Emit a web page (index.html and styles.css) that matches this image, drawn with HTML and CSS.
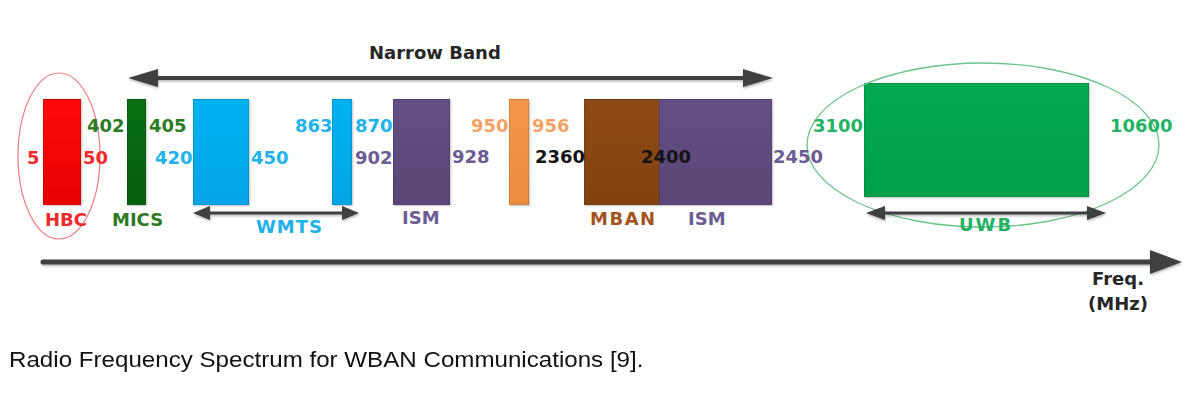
FILE: index.html
```html
<!DOCTYPE html>
<html lang="en">
<head>
<meta charset="utf-8">
<title>Radio Frequency Spectrum for WBAN Communications</title>
<link rel="stylesheet" href="styles.css">
</head>
<body>
<div class="figure">
  <div class="bar bar-hbc"></div>
  <div class="bar bar-mics"></div>
  <div class="bar bar-wmts1"></div>
  <div class="bar bar-wmts2"></div>
  <div class="bar bar-ism1"></div>
  <div class="bar bar-orange"></div>
  <div class="bar bar-mban"></div>
  <div class="bar bar-ism2"></div>
  <div class="bar bar-uwb"></div>

  <svg class="lines" width="1200" height="340" viewBox="0 0 1200 340" xmlns="http://www.w3.org/2000/svg">
    <defs>
      <filter id="sh" x="-5%" y="-50%" width="110%" height="200%">
        <feDropShadow dx="0.5" dy="1.5" stdDeviation="1" flood-color="#000" flood-opacity="0.3"/>
      </filter>
    </defs>
    <ellipse cx="59" cy="156" rx="41" ry="83" fill="none" stroke="#ea7b82" stroke-width="1.2"/>
    <ellipse cx="983" cy="145" rx="176" ry="82" fill="none" stroke="#6cc48c" stroke-width="1.3"/>
    <g fill="#404040" stroke="#404040" filter="url(#sh)">
      <line x1="150" y1="78" x2="750" y2="78" stroke-width="4"/>
      <polygon points="128,78 158,69 158,87" stroke="none"/>
      <polygon points="773,78 743,69 743,87" stroke="none"/>

      <line x1="205" y1="213" x2="347" y2="213" stroke-width="3"/>
      <polygon points="193,213 210,206 210,220" stroke="none"/>
      <polygon points="359,213 342,206 342,220" stroke="none"/>

      <line x1="878" y1="213" x2="1094" y2="213" stroke-width="3"/>
      <polygon points="866,213 885,206 885,220" stroke="none"/>
      <polygon points="1106,213 1087,206 1087,220" stroke="none"/>

      <line x1="43" y1="262" x2="1155" y2="262" stroke-width="5" stroke-linecap="round"/>
      <polygon points="1182,262 1150,250 1150,274" stroke="none"/>
    </g>
  </svg>

  <span class="lbl dark t-nb">Narrow Band</span>

  <span class="lbl red n5">5</span>
  <span class="lbl red n50">50</span>
  <span class="lbl red n-hbc">HBC</span>

  <span class="lbl green n402">402</span>
  <span class="lbl green n405">405</span>
  <span class="lbl green n-mics">MICS</span>

  <span class="lbl blue n420">420</span>
  <span class="lbl blue n450">450</span>
  <span class="lbl blue n863">863</span>
  <span class="lbl blue n870">870</span>
  <span class="lbl blue n-wmts">WMTS</span>

  <span class="lbl purple n902">902</span>
  <span class="lbl purple n928">928</span>
  <span class="lbl purple n-ism1">ISM</span>

  <span class="lbl orange n950">950</span>
  <span class="lbl orange n956">956</span>

  <span class="lbl black n2360">2360</span>
  <span class="lbl black n2400">2400</span>
  <span class="lbl brown n-mban">MBAN</span>
  <span class="lbl purple n-ism2">ISM</span>
  <span class="lbl purple n2450">2450</span>

  <span class="lbl uwb n3100">3100</span>
  <span class="lbl uwb n10600">10600</span>
  <span class="lbl uwb n-uwb">UWB</span>

  <div class="lbl dark freq">
    <span>Freq.</span>
    <span>(MHz)</span>
  </div>
</div>
<p class="caption"><span class="caption-text">Radio Frequency Spectrum for WBAN Communications [9].</span></p>
</body>
</html>
```

FILE: styles.css
```css
html, body {
  margin: 0;
  padding: 0;
  background: #ffffff;
}

.figure {
  position: relative;
  width: 1200px;
  height: 348px;
  overflow: hidden;
}

.lines {
  position: absolute;
  left: 0;
  top: 0;
}

.bar {
  position: absolute;
  top: 99px;
  height: 106px;
  box-sizing: border-box;
  border: 1px solid rgba(0, 0, 0, 0.12);
  box-shadow: 1px 1px 2px rgba(0, 0, 0, 0.25);
}

.bar-hbc { left: 43px; width: 38px; background: linear-gradient(#ff0a0a, #e60000); }
.bar-mics { left: 127px; width: 19px; background: linear-gradient(#0a6e12, #05600b); }
.bar-wmts1 { left: 193px; width: 56px; background: linear-gradient(#00b2f2, #04a4e6); }
.bar-wmts2 { left: 332px; width: 20px; background: linear-gradient(#00b2f2, #04a4e6); }
.bar-ism1 { left: 393px; width: 57px; background: linear-gradient(#644e84, #5a4677); }
.bar-orange { left: 509px; width: 20px; background: linear-gradient(#f5974a, #ec8c3e); }
.bar-mban { left: 584px; width: 76px; background: linear-gradient(#8e4a14, #82420f); }
.bar-ism2 { left: 659px; width: 113px; background: linear-gradient(#644e84, #5a4677); }
.bar-uwb {
  left: 864px;
  top: 83px;
  width: 225px;
  height: 114px;
  background: linear-gradient(#00aa52, #009e4a);
}

.lbl {
  position: absolute;
  font-family: "DejaVu Sans", "Liberation Sans", sans-serif;
  font-weight: bold;
  font-size: 18px;
  line-height: 18px;
  white-space: nowrap;
}

.red { color: #ee2b2b; }
.green { color: #2b7a24; }
.blue { color: #22b1ea; }
.purple { color: #6c5c94; }
.orange { color: #f3a266; }
.black { color: #141414; }
.brown { color: #a3531c; }
.uwb { color: #24b263; }
.dark { color: #262626; }

.t-nb { left: 369px; top: 44px; }

.n5 { left: 27px; top: 149px; }
.n50 { left: 83px; top: 149px; }
.n-hbc { left: 45px; top: 211px; }

.n402 { left: 87px; top: 117px; }
.n405 { left: 149px; top: 117px; }
.n-mics { left: 112px; top: 211px; }

.n420 { left: 155px; top: 149px; }
.n450 { left: 251px; top: 149px; }
.n863 { left: 295px; top: 117px; }
.n870 { left: 355px; top: 117px; }
.n-wmts { left: 256px; top: 218px; letter-spacing: 1px; }

.n902 { left: 355px; top: 149px; }
.n928 { left: 452px; top: 148px; }
.n-ism1 { left: 402px; top: 209px; }

.n950 { left: 471px; top: 117px; }
.n956 { left: 532px; top: 117px; }

.n2360 { left: 535px; top: 148px; }
.n2400 { left: 641px; top: 148px; }
.n-mban { left: 590px; top: 210px; letter-spacing: 1.5px; }
.n-ism2 { left: 688px; top: 210px; }
.n2450 { left: 773px; top: 148px; }

.n3100 { left: 813px; top: 117px; }
.n10600 { left: 1110px; top: 117px; }
.n-uwb { left: 959px; top: 216px; letter-spacing: 2px; }

.freq {
  left: 1082px;
  top: 270px;
  width: 72px;
  display: flex;
  flex-direction: column;
  align-items: center;
  gap: 7px;
}

.caption {
  margin: 0;
  padding-left: 9px;
  font-family: "Liberation Sans", Arial, sans-serif;
  font-size: 22px;
  line-height: 24px;
  color: #111111;
}

.caption-text {
  display: inline-block;
  transform: scaleX(1.097);
  transform-origin: left center;
}
```
